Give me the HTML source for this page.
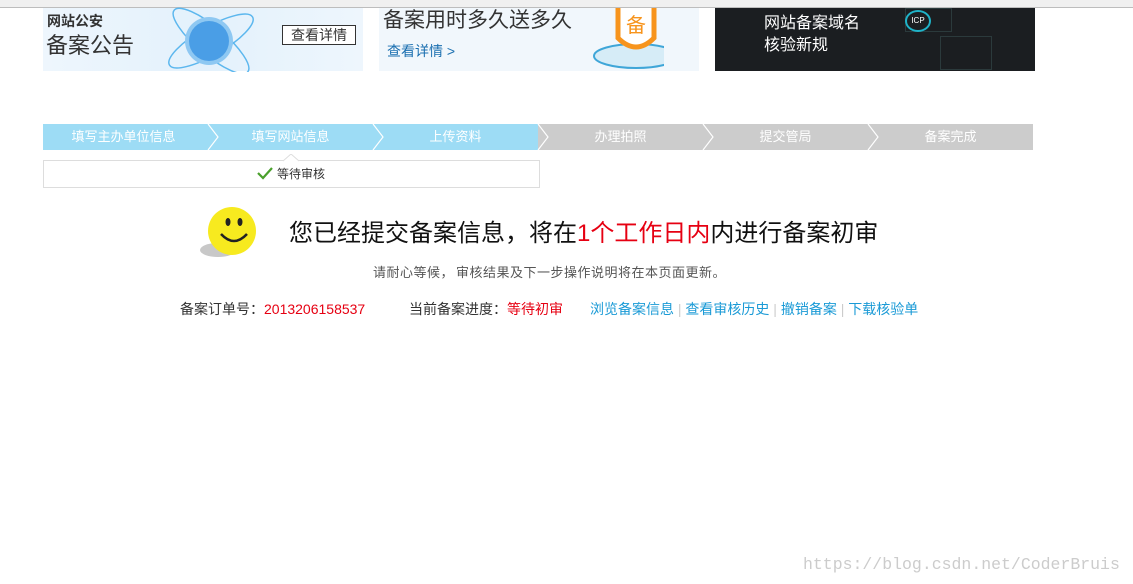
<!DOCTYPE html>
<html><head><meta charset="utf-8"><style>
body{margin:0;width:1133px;height:584px;background:#fff;font-family:"Liberation Sans","Noto Sans CJK SC",sans-serif;position:relative;overflow:hidden}
.a{position:absolute}
.top{left:0;top:0;width:1133px;height:7px;background:#f0f0f0;border-bottom:1px solid #bdbdbd}
.b1{left:43px;top:8px;width:320px;height:63px;background:linear-gradient(90deg,#eef6fd,#e3f1fc 50%,#eef6fd)}
.b2{left:379px;top:8px;width:320px;height:63px;background:#f1f7fc}
.b3{left:715px;top:8px;width:320px;height:63px;background:#1b1e21}
.steps{left:43px;top:124px;width:990px;height:26px}
.st{position:absolute;top:0;height:26px;line-height:26px;color:#fff;font-size:13px;text-align:center;width:165px}
</style></head><body>
<div class="a top"></div>
<div class="a b1">
 <div class="a" style="left:4px;top:3px;font-size:14px;font-weight:bold;color:#333">网站公安</div>
 <div class="a" style="left:3px;top:20px;font-size:22px;color:#333">备案公告</div>
 <svg class="a" style="left:118px;top:-2px" width="100" height="66"><ellipse cx="50" cy="35" rx="48" ry="14" fill="none" stroke="#5cb7ee" stroke-width="1.5" transform="rotate(-30 50 35)"/><ellipse cx="50" cy="35" rx="48" ry="14" fill="none" stroke="#5cb7ee" stroke-width="1.5" transform="rotate(40 50 35)"/><circle cx="48" cy="35" r="24" fill="#8ec8f2"/><circle cx="48" cy="35" r="20" fill="#4a9ee6"/></svg>
 <div class="a" style="left:239px;top:17px;width:72px;height:18px;border:1px solid #333;font-size:14px;line-height:18px;text-align:center;color:#333;background:#fff">查看详情</div>
</div>
<div class="a b2">
 <div class="a" style="left:4px;top:-4px;font-size:21px;color:#333">备案用时多久送多久</div>
 <div class="a" style="left:8px;top:33px;font-size:14px;color:#1a6fb0">查看详情 &gt;</div>
 <svg class="a" style="left:195px;top:0" width="90" height="63"><ellipse cx="62" cy="48" rx="42" ry="12" fill="#d6ecf7" stroke="#3fa6d8" stroke-width="2"/><path d="M44 0 V30 Q62 48 80 30 V0" fill="#fff" stroke="#f7941d" stroke-width="5"/><text x="62" y="24" font-size="20" fill="#f7941d" text-anchor="middle" font-family="Noto Sans CJK SC">备</text></svg>
</div>
<div class="a b3">
 <div class="a" style="left:49px;top:5px;font-size:16px;color:#fff;line-height:22px">网站备案域名<br>核验新规</div>
 <div class="a" style="left:190px;top:0;width:45px;height:22px;border:1px solid #2b3a3c"></div>
 <div class="a" style="left:190px;top:2px;width:22px;height:18px;border-radius:50%;border:2px solid #1fb3c8;font-size:8px;color:#fff;text-align:center;line-height:18px">ICP</div>
 <div class="a" style="left:225px;top:28px;width:50px;height:32px;border:1px solid #2b3a3c"></div>
</div>
<div class="a steps">
 <div class="st" style="left:0;background:#9ddcf5"><span style="position:relative;left:-2px">填写主办单位信息</span></div>
 <div class="st" style="left:165px;background:#9ddcf5">填写网站信息</div>
 <div class="st" style="left:330px;background:#9ddcf5">上传资料</div>
 <div class="st" style="left:495px;background:#cccccc">办理拍照</div>
 <div class="st" style="left:660px;background:#cccccc">提交管局</div>
 <div class="st" style="left:825px;background:#cccccc">备案完成</div>
 <svg class="a" style="left:0;top:0" width="990" height="26"><g fill="none" stroke="#fff" stroke-width="1.2"><path d="M165 0 L175 13 L165 26"/><path d="M330 0 L340 13 L330 26"/><path d="M495 0 L505 13 L495 26"/><path d="M660 0 L670 13 L660 26"/><path d="M825 0 L835 13 L825 26"/></g></svg>
</div>
<div class="a" style="left:43px;top:160px;width:495px;height:26px;border:1px solid #ddd;background:#fff"></div>
<svg class="a" style="left:283px;top:154px" width="16" height="8"><path d="M0 7 L8 0 L16 7" fill="#fff" stroke="#ddd"/></svg>
<svg class="a" style="left:257px;top:167px" width="16" height="13"><path d="M1 6 L6 11 L15 1" fill="none" stroke="#4aa02c" stroke-width="2.2"/></svg>
<div class="a" style="left:277px;top:165px;font-size:12px;color:#333">等待审核</div>
<svg class="a" style="left:198px;top:206px" width="62" height="52"><ellipse cx="20" cy="44" rx="18" ry="7" fill="#c8c8c8"/><circle cx="34" cy="25" r="24" fill="#f7ea1f"/><ellipse cx="30" cy="16" rx="2.5" ry="4" fill="#222"/><ellipse cx="42" cy="16" rx="2.5" ry="4" fill="#222"/><path d="M23 28 Q36 42 49 28" fill="none" stroke="#222" stroke-width="2.5"/></svg>
<div class="a" style="left:289px;top:213px;font-size:24px;color:#111;white-space:nowrap">您已经提交备案信息，将在<span style="color:#e60012">1个工作日内</span>内进行备案初审</div>
<div class="a" style="left:373px;top:262px;font-size:13px;color:#555;white-space:nowrap;letter-spacing:0.5px">请耐心等候<span style="margin-right:2px">，</span>审核结果及下一步操作说明将在本页面更新。</div>
<div class="a" style="left:180px;top:299px;font-size:14px;color:#333;white-space:nowrap">备案订单号：<span style="color:#e60012">2013206158537</span></div>
<div class="a" style="left:409px;top:299px;font-size:14px;color:#333;white-space:nowrap">当前备案进度：<span style="color:#e60012">等待初审</span></div>
<div class="a" style="left:590px;top:299px;font-size:14px;color:#1a9ad6;white-space:nowrap">浏览备案信息<span style="color:#ccc"> | </span>查看审核历史<span style="color:#ccc"> | </span>撤销备案<span style="color:#ccc"> | </span>下载核验单</div>
<div class="a" style="left:803px;top:555px;font-size:16.5px;color:#ccc;font-family:'Liberation Mono',monospace">https://blog.csdn.net/CoderBruis</div>
</body></html>
